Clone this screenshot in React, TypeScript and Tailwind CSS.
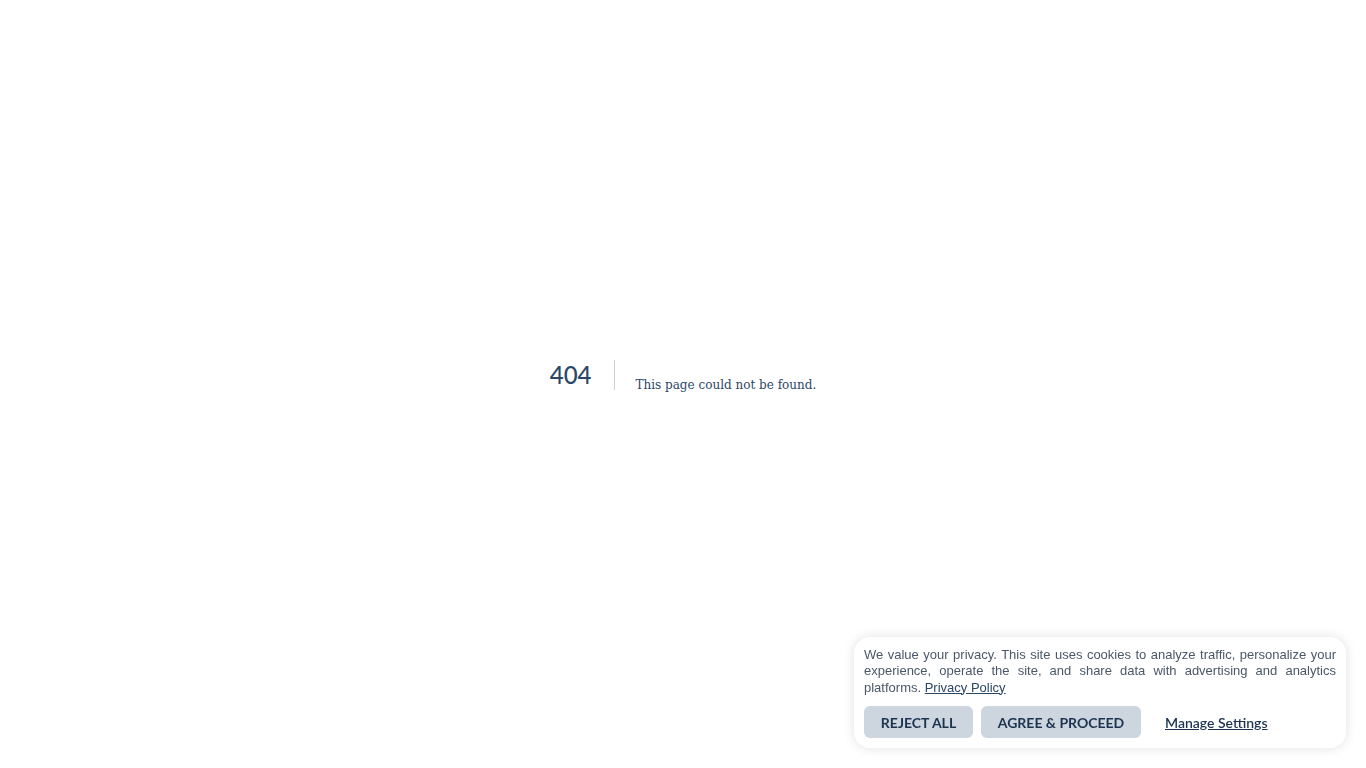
export default function App() {
  return (
    <div className="relative h-screen w-full bg-white">
      <div className="flex h-full items-center justify-center">
        <div className="flex items-start h-[49px]">
          <h1 className="mr-5 border-r border-[#c9d0d8] pr-[23px] text-[24px] leading-[30px] font-medium text-[#2b4767] font-['Lato',sans-serif]">
            404
          </h1>
          <h2 className="m-0 text-[12px] leading-[50px] font-normal text-[#2b4767] font-['DejaVu_Serif',serif]">
            This page could not be found.
          </h2>
        </div>
      </div>

      <div className="fixed bottom-5 right-5 w-[492px] rounded-2xl bg-white px-[10px] pt-[10px] pb-[10px] shadow-[0_0_12px_rgba(0,0,0,0.12)]">
        <p className="text-justify text-[13px] leading-[16.5px] text-[#4a5868] font-['Liberation_Sans',Arial,sans-serif]">
          We value your privacy. This site uses cookies to analyze traffic, personalize your experience, operate the site, and share data with advertising and analytics platforms.{" "}
          <a href="#" className="text-[#2b4767] underline">Privacy Policy</a>
        </p>
        <div className="mt-[10px] flex items-center gap-2 font-['Lato',sans-serif]">
          <button className="h-8 w-[109px] rounded-md bg-[#cdd5de] text-[14px] font-bold text-[#1c3350]">
            REJECT ALL
          </button>
          <button className="h-8 w-[160px] rounded-md bg-[#cdd5de] text-[14px] font-bold text-[#1c3350]">
            AGREE &amp; PROCEED
          </button>
          <a href="#" className="ml-4 text-[14px] font-semibold text-[#1c3350] underline">
            Manage Settings
          </a>
        </div>
      </div>
    </div>
  );
}
